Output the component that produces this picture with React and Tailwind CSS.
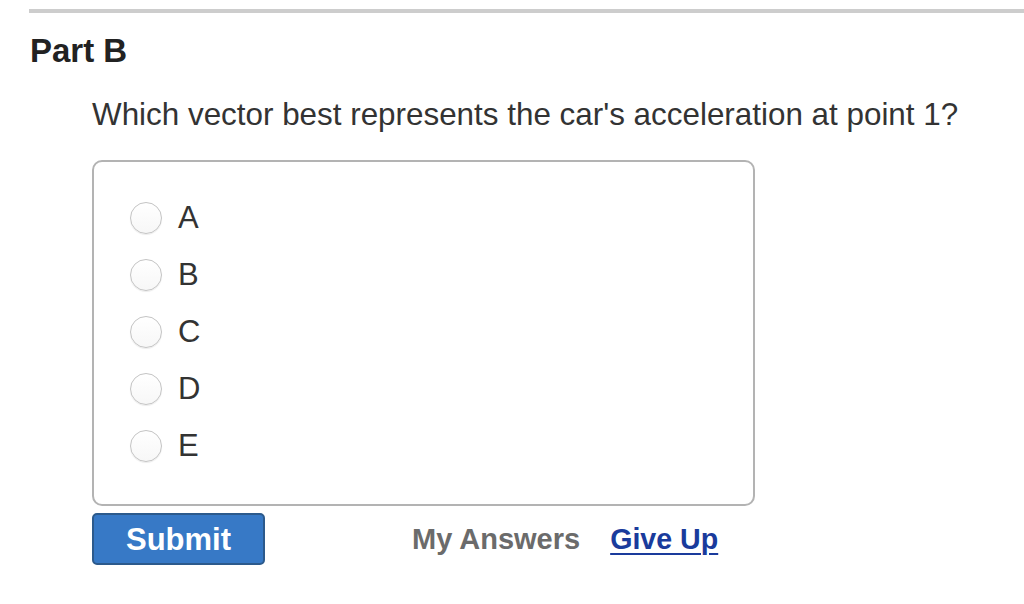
export default function App() {
  const opts = ["A", "B", "C", "D", "E"];
  return (
    <div
      className="w-[1024px] h-[604px] bg-white overflow-hidden pl-[29px] pt-[9px]"
      style={{ fontFamily: '"Liberation Sans", Arial, Helvetica, sans-serif' }}
    >
      <div className="h-[4px] bg-[#cdcdcd]" />
      <div className="mt-[20px] text-[33px] leading-[36px] font-bold text-[#222222] pl-[1px]">
        Part B
      </div>
      <div className="pl-[63px]">
        <div className="mt-[28px] text-[31.4px] leading-[36px] text-[#333333]">
          Which vector best represents the car's acceleration at point 1?
        </div>
        <div className="mt-[27px] w-[663px] h-[346px] border-2 border-[#b3b3b3] rounded-[10px] pt-[27px] pl-[36px] flex flex-col">
          {opts.map((o) => (
            <div key={o} className="h-[57px] flex items-center gap-[16px]">
              <div className="w-[32px] h-[32px] rounded-full border-[1.5px] border-[#c4c4c4] bg-gradient-to-b from-white to-[#f7f7f7] shadow-[0_1px_1px_rgba(0,0,0,0.08)]" />
              <span className="text-[31px] leading-none text-[#333333]">{o}</span>
            </div>
          ))}
        </div>
        <div className="mt-[7px] flex items-center">
          <button className="w-[173px] h-[52px] rounded-[5px] border-2 border-[#2c5a8c] bg-[#3779c6] text-white text-[31px] leading-none font-bold flex items-center justify-center">
            Submit
          </button>
          <span className="ml-[147px] text-[29px] leading-none font-bold text-[#6b6b6b]">
            My Answers
          </span>
          <span className="ml-[30px] text-[28.6px] leading-none font-bold text-[#1a3b9c] underline underline-offset-[4px] decoration-2">
            Give Up
          </span>
        </div>
      </div>
    </div>
  );
}
